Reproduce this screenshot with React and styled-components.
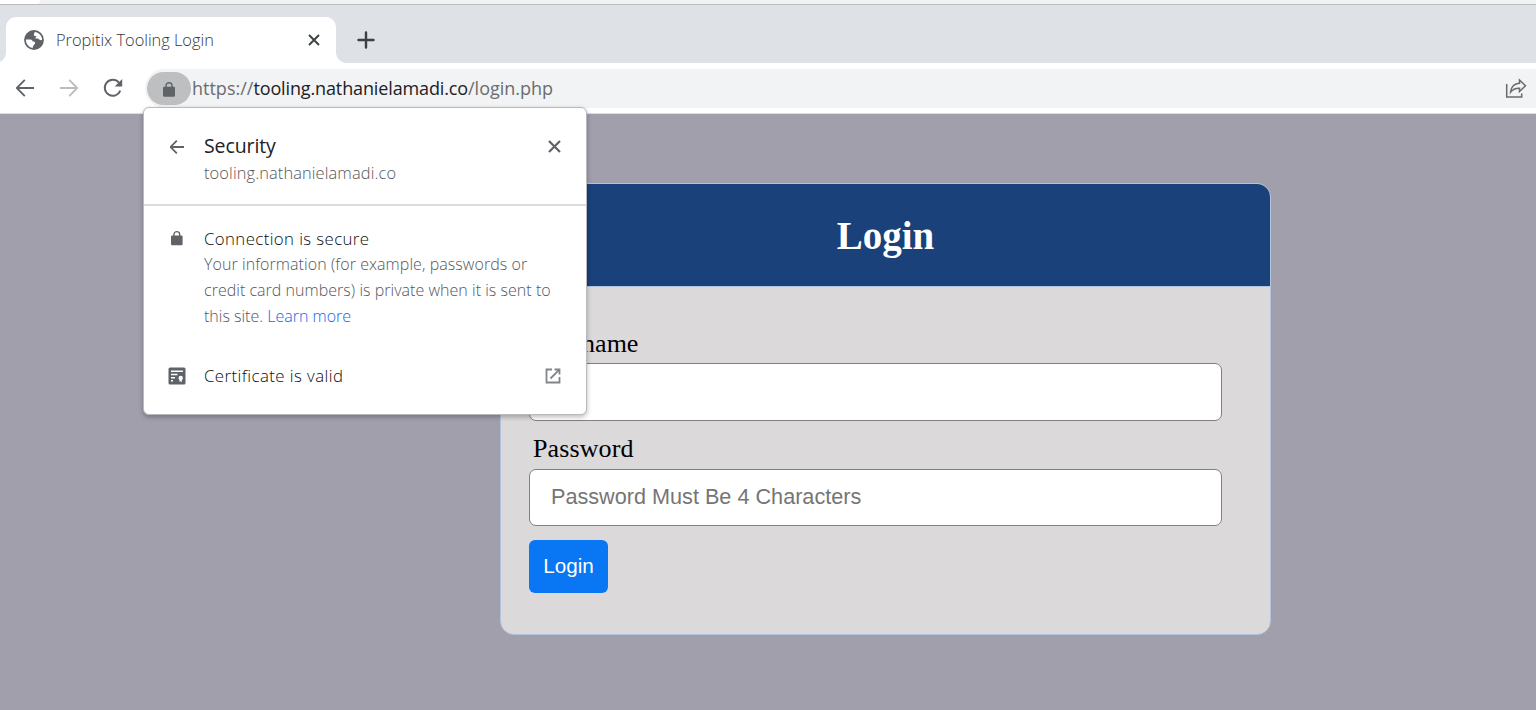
import React from "react";
import styled, { createGlobalStyle } from "styled-components";

const GlobalStyle = createGlobalStyle`
  *, *::before, *::after { box-sizing: border-box; }
  body { margin: 0; overflow: hidden; font-family: "Open Sans", "Liberation Sans", sans-serif; }
  svg { display: block; flex: none; }
  button, input { font: inherit; }
`;

const Window = styled.div`
  position: relative;
  display: flex;
  flex-direction: column;
  width: 1536px;
  height: 710px;
  overflow: hidden;
  background: #a09fab;
`;

const TopEdge = styled.div`
  flex: none;
  height: 5px;
  border-bottom: 1px solid #b9bbbd;
  background: linear-gradient(125deg, #fff 33px, #f1f2f3 34px);
`;

const TabStrip = styled.div`
  flex: none;
  display: flex;
  align-items: flex-end;
  height: 58px;
  padding-left: 6px;
  background: #dee1e6;
`;

const Tab = styled.div`
  position: relative;
  display: flex;
  align-items: center;
  width: 330px;
  height: 46px;
  padding: 0 13px 1px 18px;
  border-radius: 10px 10px 0 0;
  background: #fff;
  &::before, &::after {
    content: "";
    position: absolute;
    bottom: 0;
    width: 10px;
    height: 10px;
  }
  &::before { left: -10px; background: radial-gradient(circle at 0 0, transparent 9.5px, #fff 10px); }
  &::after { right: -10px; background: radial-gradient(circle at 100% 0, transparent 9.5px, #fff 10px); }
`;

const Label = styled.span`
  display: block;
  white-space: pre;
  font-size: ${(p) => p.$size}px;
  line-height: ${(p) => p.$line || 26}px;
  font-weight: ${(p) => p.$weight || 300};
  letter-spacing: ${(p) => p.$track || 0}px;
  color: ${(p) => p.$color || "#202124"};
`;

const TabTitle = styled(Label)`
  flex: 1;
  margin-left: 12px;
`;

const IconButton = styled.button`
  display: flex;
  align-items: center;
  justify-content: center;
  width: ${(p) => p.$width || 22}px;
  height: ${(p) => p.$height || 24}px;
  padding: 0;
  border: 0;
  background: none;
  color: ${(p) => p.$color || "#5f6368"};
`;

const NewTab = styled(IconButton)`
  margin: 0 0 11px 18px;
`;

const Toolbar = styled.div`
  flex: none;
  display: flex;
  align-items: center;
  height: 51px;
  padding-left: 13px;
  border-bottom: 1px solid #dcdde2;
  background: #fff;
`;

const Navigation = styled.div`
  display: flex;
  gap: 20px;
  width: 132px;
`;

const AddressBar = styled.div`
  flex: 1;
  display: flex;
  align-items: center;
  height: 39px;
  padding: 0 9px 0 2px;
  border-radius: 20px 0 0 20px;
  background: #f1f3f4;
`;

const SiteChip = styled.div`
  display: flex;
  align-items: center;
  justify-content: center;
  width: 44px;
  height: 33px;
  padding-top: 2px;
  border-radius: 17px;
  background: #bdbfc1;
  color: #5f6368;
`;

const Url = styled.div`
  flex: 1;
  display: flex;
  margin-left: 1px;
`;

const Page = styled.main`
  flex: 1;
  padding: 69px 0 0 500px;
`;

const Card = styled.section`
  width: 771px;
  height: 452px;
  border: 1px solid #b0c4de;
  border-radius: 14px;
  overflow: hidden;
  background: #dbd9da;
  font-family: "Liberation Serif", serif;
`;

const CardHeader = styled.h2`
  height: 103px;
  margin: 0;
  padding-top: 28px;
  border-bottom: 1px solid #b0c4de;
  background: #1a417a;
  color: #fff;
  font-size: 39px;
  line-height: 48px;
  font-weight: 700;
  text-align: center;
`;

const Form = styled.form`
  display: flex;
  flex-direction: column;
  align-items: flex-start;
  padding: 42px 48px 0 28px;
`;

const FieldLabel = styled.label`
  padding-left: 4px;
  font-size: 26px;
  line-height: 30px;
  letter-spacing: ${(p) => p.$track || 0}px;
  color: #000;
`;

const Field = styled.input`
  width: 693px;
  height: ${(p) => p.$height}px;
  margin: ${(p) => p.$above}px 0 ${(p) => p.$below}px;
  padding: 0 20px 2px 21px;
  border: 1px solid #808080;
  border-radius: 7px;
  background: #fff;
  font-family: "Liberation Sans", sans-serif;
  font-size: 21.65px;
  outline: none;
  &::placeholder { color: #757575; opacity: 1; }
`;

const Submit = styled.button`
  width: 79px;
  height: 53px;
  padding: 0 0 2px;
  border: 0;
  border-radius: 6px;
  background: #0976f3;
  color: #fff;
  font-family: "Liberation Sans", sans-serif;
  font-size: 20.7px;
`;

const Popup = styled.aside`
  position: absolute;
  left: 143px;
  top: 107px;
  width: 444px;
  height: 308px;
  border: 1px solid #b9b9bf;
  border-radius: 6px;
  background: #fff;
  box-shadow: 0 2px 5px rgba(0, 0, 0, 0.28);
`;

const PopupHeader = styled.header`
  display: flex;
  align-items: flex-start;
  height: 98px;
  padding: 24px 21px 0 22px;
  border-bottom: 2px solid #dadce0;
`;

const PopupRow = styled.div`
  display: flex;
  align-items: flex-start;
  padding: ${(p) => p.$top}px 22px 0;
  color: #5f6368;
`;

const RowIcon = styled.div`
  display: flex;
  align-items: center;
  justify-content: center;
  width: 22px;
  height: ${(p) => p.$height || 26}px;
  color: #5f6368;
`;

const RowText = styled.div`
  flex: 1;
  margin-left: 16px;
`;

const Details = styled.div`
  margin-top: -1px;
`;

const Sentence = styled.div`
  display: flex;
`;

const GlobeIcon = () => (
  <svg width="20" height="20" viewBox="0 0 20 20">
    <circle cx="10" cy="10" r="9.9" fill="#5f6368" />
    <path d="M10.8 2.1c3.2.3 5.900 2.300 6.900 5.300l.4 2.400c-1.200.8-2.300.5-3.100-.6-.9-.9-2.300-.6-3.300-.5-.5-1.200.3-1.900 1.200-2.300-.900-.4-2.300.2-2.800-.8-.5-1.300.2-2.400.7-3.500z" fill="#fff" />
    <path d="M1.900 9.500h4.300c1.600.1 2.200.8 2.500 2 1.500-.1 2.600.3 2.400 1.700-.1 1.100-1.500 1.200-1.700 2.300-.1.900-.4 1.500-1 2.400C4.700 17.200 1.800 14 1.900 9.500z" fill="#fff" />
  </svg>
);

const LockIcon = ({ size = 15 }) => (
  <svg width={(size * 12) / 15} height={size} viewBox="0 0 12 15">
    <rect x="0" y="4.700" width="12" height="10" rx="1.300" fill="#5f6368" />
    <path d="M3 5.500V3.700a3 3 0 0 1 6 0v1.800" fill="none" stroke="#5f6368" strokeWidth="1.400" />
  </svg>
);

const CrossIcon = ({ size, stroke = 2 }) => (
  <svg width={size} height={size} viewBox={`0 0 ${size} ${size}`} stroke="currentColor" strokeWidth={stroke}>
    <path d={`M1 1L${size - 1} ${size - 1}M${size - 1} 1L1 ${size - 1}`} />
  </svg>
);

const PlusIcon = () => (
  <svg width="18" height="18" viewBox="0 0 18 18" stroke="currentColor" strokeWidth="2.400" strokeLinecap="round">
    <path d="M9 1.500v15M1.500 9h15" />
  </svg>
);

const ArrowIcon = ({ size = 18, stroke = 1.8, flip = false }) => (
  <svg width={size} height={size} viewBox="0 0 18 18" fill="none" stroke="currentColor" strokeWidth={stroke}>
    <path d={flip ? "M0 9h17M9.200 .8L17.200 9l-8 8.200" : "M18 9H1M8.800 .8L.8 9l8 8.200"} />
  </svg>
);

const ReloadIcon = () => (
  <svg width="20" height="20" viewBox="0 0 20 20">
    <path d="M17.300 12.600A8 8 0 1 1 15.900 4.600" fill="none" stroke="#5f6368" strokeWidth="2" />
    <path d="M19.200 1v7.500h-7.500z" fill="#5f6368" />
  </svg>
);

const CertificateIcon = () => (
  <svg width="18" height="18" viewBox="0 0 18 18">
    <rect x="0.500" y="0.500" width="17" height="17" rx="1.500" fill="#5f6368" />
    <path d="M3 4.200h12M3 7.600h6.500M3 10.700h4M3 13.700h2" stroke="#fff" strokeWidth="1.500" fill="none" />
    <circle cx="12.700" cy="11" r="2.200" fill="#fff" />
    <path d="M11.600 12h2.200v3.200l-1.100-.9-1.100.9z" fill="#fff" />
  </svg>
);

const LaunchIcon = () => (
  <svg width="16" height="16" viewBox="0 0 16 16" fill="none" stroke="#80868b" strokeWidth="1.800">
    <path d="M7 1.500H1.500v13h13V9M9.500 1.500h5v5M14.300 1.700L5.500 10.500" />
  </svg>
);

const ShareIcon = () => (
  <svg width="22" height="22" viewBox="0 0 22 22" fill="none" stroke="#68696c" strokeWidth="1.500">
    <path d="M1.700 7v13h15v-3.600" />
    <path d="M14.500 3l6 5.800-6 5.700v-3.300c-3.800-.2-6.500.7-8.900 3.900.5-5 3.700-8.500 8.900-8.900z" />
  </svg>
);

export default function App() {
  return (
    <Window>
      <GlobalStyle />
      <TopEdge />
      <TabStrip>
        <Tab>
          <GlobeIcon />
          <TabTitle $size={16.4} $track={-0.02} $color="#34373a">Propitix Tooling Login</TabTitle>
          <IconButton $width={18} $color="#3c4043" aria-label="Close tab"><CrossIcon size={12} stroke={1.900} /></IconButton>
        </Tab>
        <NewTab $width={24} $color="#3c4043" aria-label="New tab"><PlusIcon /></NewTab>
      </TabStrip>
      <Toolbar>
        <Navigation>
          <IconButton $width={24} aria-label="Back"><ArrowIcon /></IconButton>
          <IconButton $width={24} $color="#bbbcbe" aria-label="Forward"><ArrowIcon flip /></IconButton>
          <IconButton $width={24} aria-label="Reload"><ReloadIcon /></IconButton>
        </Navigation>
        <AddressBar>
          <SiteChip><LockIcon /></SiteChip>
          <Url>
            <Label $size={18} $weight={400} $color="#6a6d70">https://</Label>
            <Label $size={18} $weight={400} $track={-0.13}>tooling.nathanielamadi.co</Label>
            <Label $size={18} $weight={400} $color="#6a6d70">/login.php</Label>
          </Url>
          <ShareIcon />
        </AddressBar>
      </Toolbar>
      <Page>
        <Card>
          <CardHeader>Login</CardHeader>
          <Form>
            <FieldLabel htmlFor="username">Username</FieldLabel>
            <Field id="username" $height={58} $above={4} $below={13} />
            <FieldLabel htmlFor="password" $track={0.12}>Password</FieldLabel>
            <Field id="password" type="password" placeholder="Password Must Be 4 Characters" $height={57} $above={5} $below={14} />
            <Submit type="button">Login</Submit>
          </Form>
        </Card>
      </Page>
      <Popup>
        <PopupHeader>
          <RowIcon $height={29}><ArrowIcon size={14} stroke={2.300} /></RowIcon>
          <RowText>
            <Label $size={19.5} $weight={400} $track={-0.1} $line={28}>Security</Label>
            <Label $size={16.4} $track={0.12} $color="#54575c">tooling.nathanielamadi.co</Label>
          </RowText>
          <IconButton $height={29} aria-label="Close"><CrossIcon size={13} stroke={2.200} /></IconButton>
        </PopupHeader>
        <PopupRow $top={20}>
          <RowIcon $height={25}><LockIcon size={14.500} /></RowIcon>
          <RowText>
            <Label $size={16.800} $track={0.4} $color="#0c0d0e">Connection is secure</Label>
            <Details>
              <Label $size={16} $track={0.07} $color="#54575c">Your information (for example, passwords or</Label>
              <Label $size={16} $track={0.03} $color="#54575c">credit card numbers) is private when it is sent to</Label>
              <Sentence>
                <Label $size={16} $color="#54575c">this site. </Label>
                <Label $size={16} $color="#1268e0">Learn more</Label>
              </Sentence>
            </Details>
          </RowText>
        </PopupRow>
        <PopupRow $top={34}>
          <RowIcon $height={25}><CertificateIcon /></RowIcon>
          <RowText><Label $size={16.800} $track={0.44} $color="#0c0d0e">Certificate is valid</Label></RowText>
          <RowIcon $height={25}><LaunchIcon /></RowIcon>
        </PopupRow>
      </Popup>
    </Window>
  );
}
